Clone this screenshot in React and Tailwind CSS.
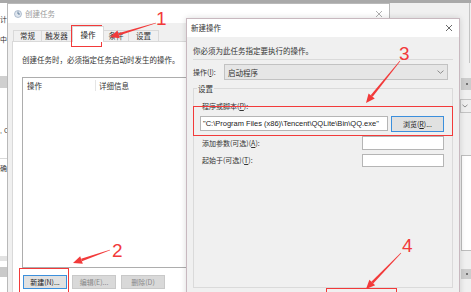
import React from 'react';

const cjk = { fontFamily: '"Noto Sans CJK SC", sans-serif' };
const latin = { fontFamily: '"Liberation Sans", Arial, sans-serif' };

function Arrow({ x1, y1, x2, y2 }) {
  // tapered red arrow from (x1,y1) to tip (x2,y2)
  const dx = x2 - x1;
  const dy = y2 - y1;
  const len = Math.hypot(dx, dy);
  const ux = dx / len;
  const uy = dy / len;
  const nx = -uy;
  const ny = ux;
  const hl = 9;
  const hw = 4;
  const bx = x2 - ux * hl;
  const by = y2 - uy * hl;
  const shaft = [
    [x1 + nx * 0.3, y1 + ny * 0.3],
    [bx + nx * 1.3, by + ny * 1.3],
    [bx - nx * 1.3, by - ny * 1.3],
    [x1 - nx * 0.3, y1 - ny * 0.3],
  ];
  const head = [
    [x2, y2],
    [bx + nx * hw, by + ny * hw],
    [bx - nx * hw, by - ny * hw],
  ];
  const p = (a) => a.map((q) => q.join(',')).join(' ');
  return (
    <g fill="#f23a3a">
      <polygon points={p(shaft)} />
      <polygon points={p(head)} />
    </g>
  );
}

function Tab({ label, active, w }) {
  if (active) {
    return (
      <div className={'relative z-10 -mb-px flex h-[16px] items-start justify-center border border-b-0 border-[#d9d9d9] bg-white pt-[2px] text-[7.5px] text-[#222] ' + w}>
        {label}
      </div>
    );
  }
  return (
    <div className={'flex h-[11px] items-center justify-center border border-b-0 border-l-0 border-[#d9d9d9] bg-[#f0f0f0] text-[7.5px] text-[#333] first:border-l ' + w}>
      {label}
    </div>
  );
}

function WinButton({ children, active }) {
  return (
    <div
      className={
        'flex h-[14px] w-[44px] items-center justify-center border text-[7px] ' +
        (active
          ? 'border-[#3c8fdc] bg-[#e1e1e1] text-[#222]'
          : 'border-[#c9c9c9] bg-[#d9d9d9] text-[#888]')
      }
    >
      {children}
    </div>
  );
}

export default function App() {
  return (
    <div className="relative h-[292px] w-[471px] overflow-hidden bg-[#f0f0f0]" style={cjk}>
      {/* top strip of window behind */}
      <div className="absolute left-0 top-0 h-[3px] w-full bg-[#a9a9a9]" />

      {/* left background window sliver */}
      <div className="absolute left-0 top-[3px] h-[289px] w-[8px] overflow-hidden bg-white text-[7px] text-[#333]">
        <div className="absolute left-0 top-[11px]">计</div>
        <div className="absolute left-0 top-[31px]">中</div>
        <div className="absolute left-0 top-[73px] h-[12px] w-full bg-[#cfcfcf]" />
        <div className="absolute left-0 top-[123px] whitespace-nowrap" style={latin}>, C</div>
        <div className="absolute left-0 top-[155px] h-px w-full bg-[#d9d9d9]" />
        <div className="absolute left-0 top-[160px]">确</div>
        <div className="absolute left-0 top-[253px] h-[5px] w-full bg-[#e2e2e2]" />
        <div className="absolute left-0 top-[264px] h-[10px] w-full bg-[#c9c9c9]" />
      </div>

      {/* right background window sliver */}
      <div className="absolute left-[389px] top-[3px] h-[289px] w-[82px] bg-[#f0f0f0]">
        <div className="absolute right-[1px] top-0 h-[60px] w-px bg-[#c4c4c4]" />
        <div className="absolute left-[72px] top-[75px] flex h-[12px] w-[12px] items-center justify-center bg-[#cdcdcd]">
          <div className="h-[2px] w-[2px] rounded-full bg-[#555]" />
        </div>
        <div className="absolute left-[71px] top-[96px] flex h-[14px] w-[14px] items-center justify-center border border-[#c4c4c4] bg-[#efefef]">
          <svg width="6" height="4" viewBox="0 0 6 4" className="ml-[-4px]">
            <path d="M0.5 0.8 L3 3 L5.5 0.8" fill="none" stroke="#777" strokeWidth="0.8" />
          </svg>
        </div>
        <div className="absolute left-[72px] top-[152px] h-[96px] w-[14px] border border-[#bdbdbd] bg-white" />
        <div className="absolute left-[72px] top-[266px] flex h-[10px] w-[12px] items-center justify-center bg-[#cdcdcd]">
          <div className="h-[2px] w-[2px] rounded-full bg-[#555]" />
        </div>
      </div>

      {/* main window: 创建任务 */}
      <div className="absolute left-[7px] top-[3px] flex h-[300px] w-[383px] flex-col border border-[#b9b9b9] bg-[#f0f0f0]">
        <div className="flex h-[19px] shrink-0 items-center bg-white pl-[6px] pr-[6px]">
          <svg width="8" height="8" viewBox="0 0 8 8">
            <circle cx="4" cy="4" r="3.5" fill="#dfe6ee" stroke="#8aa0b8" strokeWidth="0.6" />
            <path d="M4 1.5 V4 H6" stroke="#4a6a8a" strokeWidth="0.8" fill="none" />
          </svg>
          <span className="ml-[3px] text-[7.5px] text-[#9a9a9a]">创建任务</span>
          <svg className="ml-auto" width="8" height="8" viewBox="0 0 8 8">
            <path d="M1 1 L7 7 M7 1 L1 7" stroke="#9a9a9a" strokeWidth="0.8" />
          </svg>
        </div>
        <div className="flex flex-1 flex-col px-[4px] pt-[3px]">
          <div className="flex items-end pl-[1px]">
            <Tab label="常规" w="w-[29px]" />
            <Tab label="触发器" w="w-[30px]" />
            <Tab label="操作" active w="w-[32px]" />
            <Tab label="条件" w="w-[25px]" />
            <Tab label="设置" w="w-[30px]" />
          </div>
          <div className="flex flex-1 flex-col border border-[#d9d9d9] bg-white pl-[9px]">
            <div className="mt-[12px] text-[7.5px] text-[#333]">创建任务时，必须指定任务启动时发生的操作。</div>
            <div className="mt-[12px] h-[191px] w-[340px] border border-[#adadad] bg-white">
              <div className="flex h-[15px] items-center text-[7.5px] text-[#333]">
                <div className="w-[73px] border-r border-[#e5e5e5] pl-[4px]">操作</div>
                <div className="pl-[3px]">详细信息</div>
              </div>
            </div>
            <div className="mt-[7px] flex gap-[5px] pl-[1px]">
              <WinButton active>新建(N)...</WinButton>
              <WinButton>编辑(E)...</WinButton>
              <WinButton>删除(D)</WinButton>
            </div>
          </div>
        </div>
      </div>

      {/* second window: 新建操作 */}
      <div className="absolute left-[186px] top-[18px] flex h-[290px] w-[274px] flex-col border border-[#c8b8bf] bg-[#f0f0f0] shadow-[0_0_6px_rgba(0,0,0,0.15)]">
        <div className="flex h-[18px] shrink-0 items-center bg-white pl-[4px] pr-[6px]">
          <span className="text-[7.5px] text-[#333]">新建操作</span>
          <svg className="ml-auto" width="8" height="8" viewBox="0 0 8 8">
            <path d="M1 1 L7 7 M7 1 L1 7" stroke="#444" strokeWidth="0.8" />
          </svg>
        </div>
        <div className="flex flex-1 flex-col pl-[6px] pr-[6px]">
          <div className="mt-[8px] text-[7.5px] text-[#333]">你必须为此任务指定要执行的操作。</div>
          <div className="mt-[3px] h-px w-[260px] bg-[#dadada]" />
          <div className="mt-[4px] flex items-center">
            <span className="w-[31px] text-[7px] text-[#333]">操作(<span className="underline">I</span>):</span>
            <div className="flex h-[16px] w-[224px] items-center border border-[#c2c2c2] bg-[#e6e6e6] pl-[3px] pr-[3px] text-[7.5px] text-[#333]">
              启动程序
              <svg className="ml-auto" width="7" height="4" viewBox="0 0 7 4">
                <path d="M0.5 0.6 L3.5 3.3 L6.5 0.6" fill="none" stroke="#777" strokeWidth="0.8" />
              </svg>
            </div>
          </div>
          <div className="relative mt-[8px] h-[200px] w-[260px] border border-[#dadada]">
            <span className="absolute left-[3px] top-[-5px] bg-[#f0f0f0] px-[1px] text-[7.5px] leading-[9px] text-[#333]">设置</span>
            <div className="mt-[12px] pl-[8px] text-[7px] text-[#333]">程序或脚本(<span className="underline">P</span>):</div>
            <div className="mt-[4px] flex items-center pl-[6px]">
              <div
                className="flex h-[15px] w-[188px] items-center overflow-hidden whitespace-nowrap border border-[#b5b5b5] bg-white pl-[2px] text-[7.5px] text-[#222]"
                style={latin}
              >
                "C:\Program Files (x86)\Tencent\QQLite\Bin\QQ.exe"
              </div>
              <div className="ml-[3px] flex h-[16px] w-[53px] items-center justify-center border border-[#3c8fdc] bg-[#e1e1e1] text-[7px] text-[#222]">
                浏览(<span className="underline">R</span>)...
              </div>
            </div>
            <div className="mt-[4px] flex items-center pl-[8px]">
              <span className="w-[160px] text-[7px] text-[#333]">添加参数(可选)(<span className="underline">A</span>):</span>
              <div className="h-[14px] w-[82px] border border-[#b5b5b5] bg-white" />
            </div>
            <div className="mt-[4px] flex items-center pl-[8px]">
              <span className="w-[160px] text-[7px] text-[#333]">起始于(可选)(<span className="underline">T</span>):</span>
              <div className="h-[13px] w-[82px] border border-[#b5b5b5] bg-white" />
            </div>
          </div>
        </div>
      </div>

      {/* annotations */}
      <div className="pointer-events-none absolute left-[71px] top-[25px] h-[22px] w-[31px] border-[1.5px] border-[#f23a3a]" />
      <div className="pointer-events-none absolute left-[19px] top-[268px] h-[30px] w-[50px] border-[1.5px] border-[#f23a3a]" />
      <div className="pointer-events-none absolute left-[193px] top-[106px] h-[30px] w-[260px] border-[1.5px] border-[#f23a3a]" />
      <div className="pointer-events-none absolute left-[326px] top-[288px] h-[20px] w-[71px] border-[1.5px] border-[#f23a3a]" />

      <svg className="pointer-events-none absolute left-0 top-0" width="471" height="292">
        <Arrow x1={156} y1={23} x2={110} y2={37} />
        <Arrow x1={110} y1={250} x2={73} y2={263} />
        <Arrow x1={400} y1={61} x2={366} y2={103} />
        <Arrow x1={401} y1={253} x2={366} y2={289} />
      </svg>

      <span className="absolute left-[156px] top-[9px] text-[19px] leading-[19px] text-[#f23a3a]" style={latin}>1</span>
      <span className="absolute left-[112px] top-[241px] text-[19px] leading-[19px] text-[#f23a3a]" style={latin}>2</span>
      <span className="absolute left-[399px] top-[44px] text-[19px] leading-[19px] text-[#f23a3a]" style={latin}>3</span>
      <span className="absolute left-[402px] top-[236px] text-[19px] leading-[19px] text-[#f23a3a]" style={latin}>4</span>
    </div>
  );
}
